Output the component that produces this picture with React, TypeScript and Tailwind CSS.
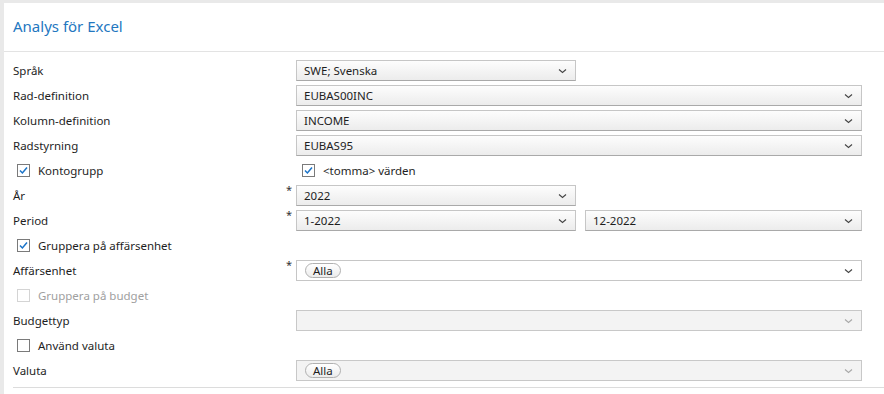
function Chevron({ disabled }: { disabled?: boolean }) {
  return (
    <svg width="9" height="6" viewBox="0 0 9 6" className="shrink-0">
      <path d="M1 1.5 L4.5 4.5 L8 1.5" fill="none" stroke={disabled ? "#a8a8a8" : "#444"} strokeWidth="1.1" />
    </svg>
  );
}

function Select({ value, className = "" }: { value: string; className?: string }) {
  return (
    <div
      className={`flex h-[21px] items-center justify-between border border-[#c6c6c6] border-b-[#a9a9a9] bg-gradient-to-b from-[#fdfdfd] to-[#ececec] pl-[7px] pr-[8px] text-[#1e1e1e] ${className}`}
    >
      <span>{value}</span>
      <Chevron />
    </div>
  );
}

function Pill() {
  return (
    <span className="flex h-[15px] items-center rounded-full border border-[#b0b0b0] bg-gradient-to-b from-white to-[#ececec] px-[7px] leading-none text-[#1e1e1e]">
      Alla
    </span>
  );
}

function Check({ checked, disabled }: { checked?: boolean; disabled?: boolean }) {
  return (
    <span
      className={`flex h-[13px] w-[13px] shrink-0 items-center justify-center border bg-white ${
        disabled ? "border-[#d4d4d4]" : "border-[#7a7a7a]"
      }`}
    >
      {checked && (
        <svg width="11" height="11" viewBox="0 0 11 11">
          <path d="M2 5.5 L4.4 8 L9 2.6" fill="none" stroke="#1a73c8" strokeWidth="1.5" />
        </svg>
      )}
    </span>
  );
}

function Label({ text, required }: { text: string; required?: boolean }) {
  return (
    <div className="relative flex h-[21px] w-[283px] shrink-0 items-center">
      <span>{text}</span>
      {required && <span className="absolute right-[4px] top-[-3px] text-[11px] text-[#333]">*</span>}
    </div>
  );
}

function CheckRow({ text, checked, disabled }: { text: string; checked?: boolean; disabled?: boolean }) {
  return (
    <label className={`flex h-[21px] items-center gap-[8px] pl-[4px] ${disabled ? "text-[#a0a0a0]" : ""}`}>
      <Check checked={checked} disabled={disabled} />
      <span>{text}</span>
    </label>
  );
}

export default function App() {
  return (
    <div className="h-[394px] w-[884px] overflow-hidden bg-[#e9e9e9] pl-[4px] pt-[3px] text-[11.5px] text-[#1e1e1e] [font-family:'Noto_Sans',sans-serif]">
      <div className="h-full bg-white">
        <div className="flex h-[49px] items-center border-b border-[#e3e3e3] pl-[9px] pb-[2px]">
          <h1 className="text-[15px] text-[#2377bf]">Analys för Excel</h1>
        </div>
        <div className="flex flex-col gap-[4px] pl-[9px] pt-[8px]">
          <div className="flex">
            <Label text="Språk" />
            <Select value="SWE; Svenska" className="w-[280px]" />
          </div>
          <div className="flex">
            <Label text="Rad-definition" />
            <Select value="EUBAS00INC" className="w-[566px]" />
          </div>
          <div className="flex">
            <Label text="Kolumn-definition" />
            <Select value="INCOME" className="w-[566px]" />
          </div>
          <div className="flex">
            <Label text="Radstyrning" />
            <Select value="EUBAS95" className="w-[566px]" />
          </div>
          <div className="flex">
            <div className="w-[283px] shrink-0">
              <CheckRow text="Kontogrupp" checked />
            </div>
            <div className="pl-[2px]">
              <CheckRow text="<tomma> värden" checked />
            </div>
          </div>
          <div className="flex">
            <Label text="År" required />
            <Select value="2022" className="w-[280px]" />
          </div>
          <div className="flex">
            <Label text="Period" required />
            <Select value="1-2022" className="w-[280px]" />
            <Select value="12-2022" className="ml-[9px] w-[277px]" />
          </div>
          <CheckRow text="Gruppera på affärsenhet" checked />
          <div className="flex">
            <Label text="Affärsenhet" required />
            <div className="flex h-[21px] w-[566px] items-center justify-between border border-[#c6c6c6] bg-white pl-[8px] pr-[8px]">
              <Pill />
              <Chevron />
            </div>
          </div>
          <CheckRow text="Gruppera på budget" disabled />
          <div className="flex">
            <Label text="Budgettyp" />
            <div className="flex h-[21px] w-[566px] items-center justify-end border border-[#c8c8c8] bg-[#f3f3f3] pr-[8px]">
              <Chevron disabled />
            </div>
          </div>
          <CheckRow text="Använd valuta" />
          <div className="flex">
            <Label text="Valuta" />
            <div className="flex h-[21px] w-[566px] items-center justify-between border border-[#c8c8c8] bg-[#f3f3f3] pl-[8px] pr-[8px]">
              <Pill />
              <Chevron disabled />
            </div>
          </div>
        </div>
        <div className="ml-[9px] mt-[6px] border-t border-[#dcdcdc]" />
      </div>
    </div>
  );
}
